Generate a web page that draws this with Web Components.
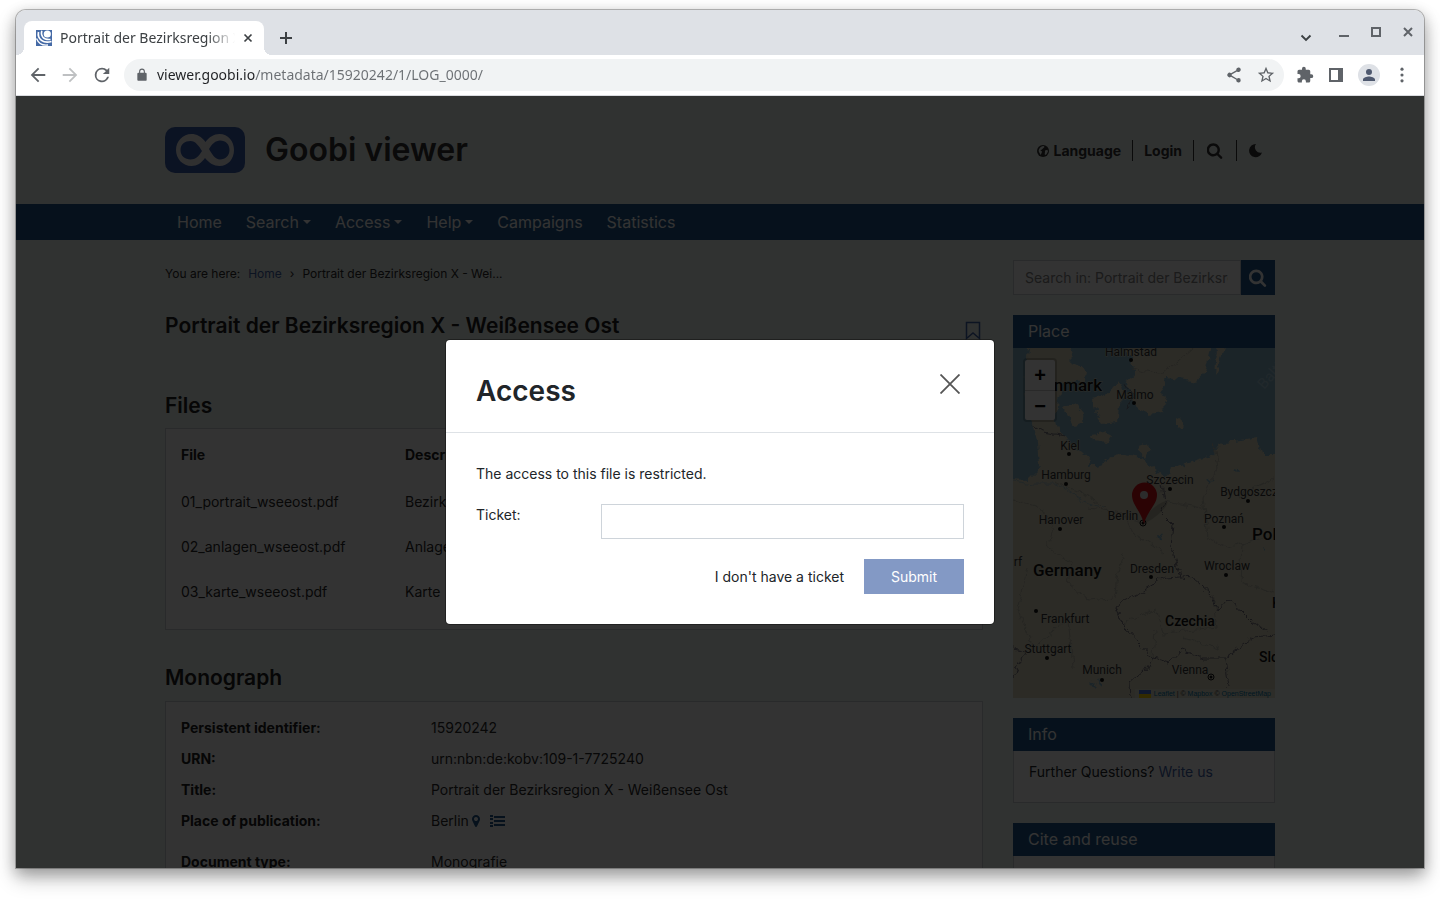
<!DOCTYPE html>
<html lang="en">
<head>
<meta charset="utf-8">
<title>Portrait der Bezirksregion X - Weißensee Ost</title>
<style>
  html, body { height: 100%; }
  body { margin: 0; background: #fff; font-family: Inter, "Liberation Sans", sans-serif; font-size: 14px; line-height: 22px; color: #212529; }
</style>
</head>
<body>
<browser-window>
  <browser-tabs slot="tabs" title-text="Portrait der Bezirksregion X - Weißensee Ost"></browser-tabs>
  <browser-toolbar slot="toolbar"></browser-toolbar>
  <goobi-page>
    <goobi-header slot="header"></goobi-header>
    <goobi-nav slot="nav"></goobi-nav>
    <record-view slot="main"></record-view>
    <side-search slot="side"></side-search>
    <side-widget slot="side" heading="Place" flush><place-map></place-map></side-widget>
    <side-widget slot="side" heading="Info">Further Questions? <text-link>Write us</text-link></side-widget>
    <side-widget slot="side" heading="Cite and reuse">Citation links</side-widget>
  </goobi-page>
  <access-modal slot="overlay" heading="Access"></access-modal>
</browser-window>

<script>
const RESET = `
  *, *::before, *::after { box-sizing: border-box; }
  button, input { font: inherit; color: inherit; margin: 0; padding: 0; border: 0; background: none; border-radius: 0; outline: none; }
  a { text-decoration: none; color: #3f63a8; }
  h1, h2, h3, p, dl, dd, ul { margin: 0; padding: 0; }
  ul { list-style: none; }
  svg { display: block; }
`;
const SEARCH = '<path d="M1216 832q0-185-131.500-316.500t-316.500-131.500-316.500 131.500-131.500 316.500 131.500 316.500 316.500 131.500 316.500-131.500 131.500-316.500zm512 832q0 52-38 90t-90 38q-54 0-90-38l-343-342q-179 124-399 124-143 0-273.500-55.500t-225-150-150-225-55.500-273.500 55.500-273.500 150-225 225-150 273.500-55.500 273.500 55.500 225 150 150 225 55.500 273.500q0 220-124 399l343 343q37 37 37 90z"/>';

function define(name, css, html) {
  customElements.define(name, class extends HTMLElement {
    constructor() {
      super();
      const root = this.attachShadow({ mode: 'open' });
      root.innerHTML = `<style>${RESET}${css}</style>${typeof html === 'function' ? html(this) : html}`;
    }
  });
}

define('browser-window', `
  :host { display: flex; height: 100vh; padding: 10px 16px 32px; box-sizing: border-box; overflow: hidden; }
  .frame { flex: 1; min-width: 0; display: flex; flex-direction: column; border-radius: 10px 10px 0 0; background: #fff;
    box-shadow: 0 0 0 1px rgba(0,0,0,.25), 0 4px 14px 1px rgba(0,0,0,.2), 0 10px 20px rgba(0,0,0,.28); }
  .view { position: relative; flex: 1; min-height: 0; overflow: hidden; border-top: 1px solid #dadce0; }
`, `<div class="frame"><slot name="tabs"></slot><slot name="toolbar"></slot>
    <div class="view"><slot></slot><slot name="overlay"></slot></div></div>`);

define('browser-tabs', `
  :host { display: flex; align-items: flex-end; height: 45px; padding: 0 8px; background: #dee1e6; border-radius: 10px 10px 0 0; font-family: "Noto Sans", sans-serif; font-size: 14px; color: #3c4043; }
  .tab { position: relative; display: flex; align-items: center; gap: 8px; width: 240px; height: 34px; padding: 0 11px 0 12px; background: #fff; border-radius: 8px 8px 0 0; }
  .tab::before, .tab::after { content: ""; position: absolute; bottom: 0; width: 8px; height: 8px; }
  .tab::before { left: -8px; background: radial-gradient(circle at 0 0, #dee1e6 8px, #fff 8px); }
  .tab::after { right: -8px; background: radial-gradient(circle at 100% 0, #dee1e6 8px, #fff 8px); }
  .title { flex: 1; min-width: 0; overflow: hidden; white-space: nowrap; -webkit-mask-image: linear-gradient(to right, #000 84%, transparent); mask-image: linear-gradient(to right, #000 84%, transparent); }
  .new { margin: 0 auto 0 15px; height: 34px; display: flex; align-items: center; }
  .win { display: flex; align-items: center; align-self: flex-start; height: 44px; gap: 20px; padding-right: 2px; color: #5f6368; }
  .win button { display: flex; justify-content: center; width: 12px; }
`, host => `
  <div class="tab">
    <svg width="16" height="16" viewBox="0 0 16 16"><rect width="16" height="16" fill="#456aa6"/><circle cx="11.300" cy="4" r="3.600" fill="#fff"/><g fill="none" stroke="#fff"><path d="M5.800.8C4.500 5.500 7 10.200 14.500 9.500" stroke-width="1.500"/><path d="M2.500 2C1 9 7.500 14 15.500 11.500" stroke-width="1.700"/><path d="M.5 8.500C2.500 13.500 7 15.700 12 15" stroke-width="1.300"/></g></svg>
    <span class="title">${host.getAttribute('title-text')}</span>
    <button aria-label="Close tab"><svg width="10" height="10" viewBox="0 0 10 10" stroke="#3c4043" stroke-width="1.700"><path d="M1.500 1.500l7 7M8.500 1.500l-7 7"/></svg></button>
  </div>
  <button class="new" aria-label="New tab"><svg width="14" height="14" viewBox="0 0 14 14" stroke="#3c4043" stroke-width="2"><path d="M7 1v12M1 7h12"/></svg></button>
  <div class="win">
    <button aria-label="Search tabs"><svg width="12" height="20" viewBox="0 0 12 20" fill="none" stroke="#3c4043" stroke-width="1.900"><path d="M1.500 13.500L6 18l4.500-4.500"/></svg></button>
    <button aria-label="Minimize" style="margin-left:6px"><svg width="12" height="12" viewBox="0 0 12 12" fill="currentColor"><path d="M1 9h10v2H1z"/></svg></button>
    <button aria-label="Maximize"><svg width="10" height="10" viewBox="0 0 10 10" fill="none" stroke="currentColor" stroke-width="2"><path d="M1 1h8v8H1z"/></svg></button>
    <button aria-label="Close window"><svg width="10" height="10" viewBox="0 0 10 10" stroke="currentColor" stroke-width="2"><path d="M1 1l8 8M9 1L1 9"/></svg></button>
  </div>`);

define('browser-toolbar', `
  :host { display: flex; align-items: center; gap: 12px; height: 40px; padding: 0 12px; font-family: "Noto Sans", sans-serif; font-size: 14px; color: #5f6368; }
  svg { fill: currentColor; width: 20px; height: 20px; }
  .omni { flex: 1; display: flex; align-items: center; gap: 8px; height: 32px; padding: 0 9px 0 11px; border-radius: 16px; background: #f1f3f4; }
  .omni svg { width: 18px; height: 18px; }
  .omni svg.lock { width: 14px; height: 14px; }
  input { flex: 1; min-width: 0; height: 22px; color: transparent; -webkit-background-clip: text; background-clip: text; background-image: linear-gradient(to right, #202124 98px, #6b6f73 98px); }
  .omni button + button { margin-left: 6px; }
  .avatar { width: 22px; height: 22px; border-radius: 50%; background: #dee1e6; color: #4e586e; display: grid; place-items: center; }
  .avatar svg { width: 18px; height: 18px; }
  .dim { opacity: .4; }
`, `
  <button aria-label="Back"><svg viewBox="1 1 22 22"><path d="M20 11H7.830l5.590-5.590L12 4l-8 8 8 8 1.410-1.410L7.830 13H20v-2z"/></svg></button>
  <button aria-label="Forward" class="dim"><svg viewBox="1 1 22 22"><path d="M12 4l-1.410 1.410L16.170 11H4v2h12.170l-5.580 5.590L12 20l8-8z"/></svg></button>
  <button aria-label="Reload"><svg viewBox="1 1 22 22"><path d="M17.650 6.350A7.960 7.960 0 0 0 12 4a8 8 0 1 0 7.730 10h-2.080A6 6 0 1 1 12 6c1.660 0 3.140.69 4.220 1.780L13 11h7V4l-2.350 2.350z"/></svg></button>
  <div class="omni">
    <svg class="lock" viewBox="0 0 24 24"><path d="M18 8h-1V6A5 5 0 0 0 7 6v2H6a2 2 0 0 0-2 2v10c0 1.100.9 2 2 2h12a2 2 0 0 0 2-2V10a2 2 0 0 0-2-2zM8.900 6a3.100 3.100 0 0 1 6.200 0v2H8.900V6z"/></svg>
    <input type="text" aria-label="Address" value="viewer.goobi.io/metadata/15920242/1/LOG_0000/">
    <button aria-label="Share"><svg viewBox="0 0 24 24"><path d="M18 16.080c-.76 0-1.440.3-1.960.77L8.910 12.700a3.300 3.300 0 0 0 0-1.400l7.050-4.110A3 3 0 1 0 15 5c0 .24.040.47.090.7L8.040 9.810a3 3 0 1 0 0 4.380l7.120 4.160A2.920 2.920 0 1 0 18 16.080z"/></svg></button>
    <button aria-label="Bookmark this page"><svg viewBox="1 1 22 22"><path d="M22 9.240l-7.190-.62L12 2 9.190 8.630 2 9.240l5.460 4.730L5.820 21 12 17.270 18.180 21l-1.630-7.030L22 9.240zM12 15.400l-3.760 2.270 1-4.280-3.320-2.880 4.380-.38L12 6.100l1.710 4.040 4.380.38-3.320 2.880 1 4.280L12 15.400z"/></svg></button>
  </div>
  <button aria-label="Extensions"><svg viewBox="0 0 24 24" style="width:18px"><path d="M20.500 11H19V7a2 2 0 0 0-2-2h-4V3.500a2.500 2.500 0 0 0-5 0V5H4a2 2 0 0 0-2 2v3.800h1.500a2.700 2.700 0 0 1 0 5.400H2V20c0 1.100.9 2 2 2h3.800v-1.500a2.700 2.700 0 0 1 5.400 0V22H17a2 2 0 0 0 2-2v-4h1.500a2.500 2.500 0 0 0 0-5z"/></svg></button>
  <button aria-label="Side panel"><svg viewBox="0 0 20 20"><path d="M3 3h14v14H3zM5 5v10h7V5z" fill-rule="evenodd"/></svg></button>
  <button aria-label="Profile" class="avatar"><svg viewBox="0 0 24 24"><path d="M12 12a4 4 0 1 0 0-8 4 4 0 0 0 0 8zm0 2c-2.670 0-8 1.340-8 4v2h16v-2c0-2.660-5.330-4-8-4z"/></svg></button>
  <button aria-label="Menu"><svg viewBox="0 0 24 24"><circle cx="12" cy="5" r="1.900"/><circle cx="12" cy="12" r="1.900"/><circle cx="12" cy="19" r="1.900"/></svg></button>`);

define('goobi-page', `
  :host { display: block; background: #f0f7f3; min-height: 100%; }
  .body { max-width: 1110px; margin: 0 auto; padding-top: 20px; display: grid; grid-template-columns: minmax(0, 1fr) 262px; gap: 30px; }
  .side { display: flex; flex-direction: column; gap: 20px; }
`, `<slot name="header"></slot><slot name="nav"></slot>
  <div class="body"><main><slot name="main"></slot></main><aside class="side"><slot name="side"></slot></aside></div>`);

define('goobi-header', `
  :host { display: flex; align-items: center; max-width: 1110px; height: 108px; margin: 0 auto; color: #333; }
  .logo { margin-right: 20px; }
  h1 { flex: 1; font-size: 32px; line-height: 40px; font-weight: 600; }
  ul { display: flex; align-items: center; padding-top: 1px; font-weight: 700; }
  li { display: flex; align-items: center; height: 21px; padding: 0 11px; }
  li + li { border-left: 1px solid #333; }
  li a, li button { display: flex; align-items: center; gap: 5px; color: #333; }
  li svg { fill: currentColor; }
`, `
  <svg class="logo" width="80" height="46" viewBox="0 0 80 46"><rect width="80" height="46" rx="10" fill="#3a5fb0"/><path fill-rule="evenodd" fill="#f0f0f0" d="M40.500 15C36.500 9.500 31.500 7 26.500 7 18 7 11 14 11 23s7 16 15.500 16c5.500 0 10-3 13.500-8 4 5 9 8 14.500 8C63 39 69 32 69 23S63 7 54.500 7c-5.500 0-10.500 3-14 8zM37 24c-3 5-6.500 8.500-11.500 8.500C20 32.500 15.500 29 15.500 23s4.500-9 10-9c5 0 8.500 5 11.500 10zM44 22c3-5 6.500-8.500 11-8.500 6 0 9.500 4 9.500 9.500s-4 9.500-9.500 9.500c-5 0-8-5.500-11-10.500z"/></svg>
  <h1>Goobi viewer</h1>
  <ul>
    <li><button><svg width="12" height="12" viewBox="0 0 12 12"><circle cx="6" cy="6" r="6"/><path fill="#f0f7f3" d="M5 1.300L6.700 1l.8.900-1.300 1.300L4.600 4.700 3.300 5.300l1.700 1.200-.4 1.600-1 1.900L2.500 8 1.600 6 2 4.200l1.200-1.600zM8 5.500l2.300-.7.700 1.400-.9 2L8.800 10 7.600 9.300l.3-1.400z"/></svg>Language</button></li>
    <li><a href="#login">Login</a></li>
    <li style="padding:0 13px"><button aria-label="Search"><svg width="16" height="16" viewBox="100 100 1700 1700">${SEARCH}</svg></button></li>
    <li style="padding-right:12px"><button aria-label="Dark mode"><svg width="15" height="15" viewBox="0 0 15 15"><path d="M8 1A6.600 6.600 0 1 0 14 9.500 5.500 5.500 0 0 1 8 1z"/></svg></button></li>
  </ul>`);

define('goobi-nav', `
  :host { display: block; background: #1f568a; }
  ul { display: flex; max-width: 1110px; margin: 0 auto; font-size: 16px; line-height: 36px; }
  a { display: flex; align-items: center; gap: 4px; padding: 0 12px; color: #fff; }
  .drop::after { content: ""; border: 4px solid transparent; border-top-color: currentColor; border-bottom: 0; }
`, `<nav><ul>
    <li><a href="#home">Home</a></li><li><a class="drop" href="#search">Search</a></li><li><a class="drop" href="#access">Access</a></li>
    <li><a class="drop" href="#help">Help</a></li><li><a href="#campaigns">Campaigns</a></li><li><a href="#statistics">Statistics</a></li></ul></nav>`);

define('text-link', ':host { display: inline; }', '<a href="#contact"><slot></slot></a>');

define('side-search', `
  :host { display: block; }
  form { display: flex; height: 35px; }
  input { flex: 1; min-width: 0; padding: 0 12px 0 11px; background: #fff; border: 1px solid #ccd3d7; }
  input::placeholder { color: #858585; opacity: 1; }
  button { width: 34px; background: #1f568a; display: grid; place-items: center; }
  svg { fill: #fff; }
`, `<form><input type="text" aria-label="Search" placeholder="Search in: Portrait der Bezirksregion X - Weißensee Ost"><button type="button" aria-label="Start search"><svg width="18" height="18" viewBox="80 80 1720 1720">${SEARCH}</svg></button></form>`);

define('side-widget', `
  :host { display: block; }
  h3 { padding: 0 15px; background: #1f568a; color: #fff; font-size: 16px; line-height: 33px; font-weight: 400; }
  .body { padding: 10px 15px 19px; background: #fff; border: 1px solid #ccd3d7; border-top: 0; }
  :host([flush]) .body { padding: 0; border: 0; }
`, host => `<section><h3>${host.getAttribute('heading')}</h3><div class="body"><slot></slot></div></section>`);

const CITIES = [
  ['Halmstad', 118, 8, 118, 12], ['Malmo', 122, 51, 121, 55], ['Kiel', 57, 102, 56, 106], ['Hamburg', 53, 131, 53, 136],
  ['Szczecin', 157, 136, 157, 141], ['Bydgoszcz', 236, 148, 235, 153], ['Hanover', 48, 176, 47, 181],
  ['Poznań', 211, 175, 211, 179], ['Dresden', 139, 225, 138, 229], ['Wroclaw', 214, 222, 213, 227], ['Frankfurt', 52, 275, 23, 263],
  ['Stuttgart', 35, 305, 34, 310], ['Munich', 89, 326, 89, 332]
];
define('place-map', `
  :host { display: block; position: relative; height: 350px; overflow: hidden; background: #85b3c8; }
  .label { font-family: Roboto, sans-serif; font-size: 12px; fill: #333; text-anchor: middle; paint-order: stroke; stroke: #dcdac4; stroke-width: 1px; }
  .land { fill: #d9d5bd; }
  .country { font-weight: 500; fill: #111; text-anchor: start; font-size: 17px; }
  .mid { font-size: 14px; }
  .line { fill: none; stroke: #77747f; stroke-width: 1; }
  .thin { fill: none; stroke: #b9b7a9; stroke-width: 1; }
  .zoom { position: absolute; left: 12px; top: 12px; width: 30px; background: #fff; outline: 2px solid rgba(0,0,0,.2); border-radius: 2px; }
  .zoom button { display: grid; place-items: center; width: 30px; height: 30px; color: #000; font: 700 20px/22px "Liberation Sans", sans-serif; }
  .zoom button + button { border-top: 1px solid #ccc; }
  .credit { position: absolute; right: 0; bottom: 0; display: flex; align-items: center; gap: 3px; padding: 0 4px; height: 9px; background: rgba(255,255,255,.25); font: 7px/9px "Liberation Sans", sans-serif; color: #333; white-space: nowrap; }
  .credit a { color: #0078a8; }
`, `
  <svg width="100%" height="350">
    <defs><filter id="rough" x="-5%" y="-5%" width="110%" height="110%"><feTurbulence type="fractalNoise" baseFrequency="0.12" numOctaves="3" seed="4"/><feDisplacementMap in="SourceGraphic" scale="9" xChannelSelector="R" yChannelSelector="G"/></filter></defs>
    <g filter="url(#rough)">
      <g class="land">
        <path d="M16-8L14 10 12 40 14 62 20 75 24 92 25 107 27 122 17 132-8 131V362H280V107H249L244 89 210 95 200 107 184 112 160 120 152 130 137 117 127 109 107 105 89 115 76 119 77 109 60 101 52 89 44 82 42 74 45 52 50 35 72 32 73 22 55 14 61 8 54-8z"/>
        <path d="M108-8L119 12 122 24 112 32 120 47 122 59 137 66 149 64 153 52 149 39 154 29 184 34 192 25 199-8zM50 60L62 54 72 66 70 76 60 78zM80 50L96 44 105 33 113 46 106 60 104 74 90 76 82 64zM78 86L90 84 98 88 94 94 80 92zM162 70l8 4-1 7-7-3zM207-5l3 4-6 25-3 4 1-14zM124 103l6-9 7 7-5 9z"/>
      </g>
      <path class="thin" d="M0 150L28 160 40 180 35 200 60 215 55 235 75 252 100 250M75 160L110 165 120 185 150 205M42 133L80 150 100 168 130 175M200 95L205 120 190 150 195 190 215 200 250 190M110 205L105 230 102 250M15 220L5 262 20 300 55 270 60 320M110 275L142 262 150 285 205 280 200 245M140 310L142 282M225 148L262 130M230 195L228 235 262 245M150 153L190 160M118 20L150 26 180 0M170 290L205 300"/>
      <path class="line" d="M149 135L152 155 148 165 160 177 158 198 168 229 180 230 197 245 205 262 214 252 227 262 240 275 255 282 M102 257L130 243 150 230 168 229M102 257L112 280 140 310 157 315 169 302 190 310 212 310 240 289 265 287M140 310L132 322 117 335 118 352M212 310L216 340M0 300L12 303 0 330M18 76L30 84 52 88M111 35L120 48 113 62"/>
      <path d="M0 133L20 136 45 136 70 152 90 160" fill="none" stroke="#85b3c8" opacity=".6"/>
      <path d="M78 334l5 6M85 330l4 8M222 120l4 2M147 185l2 6M195 130l4 4M250 200l3 2" stroke="#85b3c8" stroke-width="2"/>
    </g>
    <g>${CITIES.map(([n, x, y, cx, cy]) => `<text class="label" x="${x}" y="${y}">${n}</text><circle cx="${cx}" cy="${cy}" r="2" fill="#111"/>`).join('')}
      <text class="label" x="110" y="172">Berlin</text><text class="label" x="177" y="326">Vienna</text><text class="label" x="5" y="218">rf</text>
      <g fill="none" stroke="#111"><circle cx="130" cy="175" r="3"/><circle cx="198" cy="329" r="3"/></g><g fill="#111"><circle cx="130" cy="175" r="1.500"/><circle cx="198" cy="329" r="1.500"/></g>
      <text class="label country" x="89" y="43" style="text-anchor:end">Denmark</text>
      <text class="label country" x="20" y="228">Germany</text><text class="label country" x="239" y="192">Poland</text>
      <text class="label country mid" x="152" y="278">Czechia</text><text class="label country mid" x="246" y="314">Slovakia</text><text class="label country mid" x="259" y="260">Kraków</text>
      <text transform="translate(251 42) rotate(-48)" font-family="Roboto, sans-serif" font-size="15" fill="#a5c8d8">Baltic</text>
    </g>
    <ellipse cx="142" cy="164" rx="16" ry="4" transform="rotate(-40 142 164)" fill="#000" opacity=".15"/>
    <path d="M131 176C128 163 119 157 119 147a12.500 12.500 0 0 1 25 0c0 10-10 16-13 29z" fill="#d81118"/><circle cx="131" cy="147" r="4" fill="#ddd"/>
  </svg>
  <div class="zoom"><button aria-label="Zoom in">+</button><button aria-label="Zoom out">−</button></div>
  <div class="credit"><svg width="12" height="8" viewBox="0 0 12 8"><path fill="#4c7be1" d="M0 0h12v4H0z"/><path fill="#ffd500" d="M0 4h12v4H0z"/></svg><span><a href="#leaflet">Leaflet</a> | © <a href="#mapbox">Mapbox</a> © <a href="#osm">OpenStreetMap</a></span></div>`);

define('record-view', `
  :host { display: block; color: #2a2a2a; }
  .crumbs { display: flex; gap: 8px; padding-top: 3px; font-size: 12px; }
  .head { display: flex; justify-content: space-between; align-items: flex-start; height: 24px; margin-top: 29px; }
  h2 { font-size: 21px; line-height: 24px; font-weight: 600; color: #222; }
  .files-title { margin: 56px 0 10px; }
  .mono-title { margin: 36px 0 11px; }
  .card { background: #fff; border: 1px solid #ccd3d7; padding: 15px; }
  .head svg { margin: 7px 2px 0 0; }
  table { width: 100%; border-collapse: collapse; table-layout: fixed; }
  th, td { text-align: left; padding: 0; height: 45px; font-weight: 400; vertical-align: middle; }
  th { height: 35px; vertical-align: top; font-weight: 700; color: #222; }
  th:first-child { width: 224px; }
  dl { display: grid; grid-template-columns: 250px 1fr; row-gap: 9px; }
  dt { font-weight: 700; color: #222; }
  dd { display: flex; align-items: center; }
  .gap { padding-bottom: 10px; }
`, `
  <nav class="crumbs" aria-label="Breadcrumb"><span>You are here:</span><a href="#home">Home</a><span>›</span><span>Portrait der Bezirksregion X - Wei...</span></nav>
  <div class="head"><h2>Portrait der Bezirksregion X - Weißensee Ost</h2><button aria-label="Bookmark"><svg width="16" height="20" viewBox="0 0 16 20" fill="none" stroke="#3f63a8" stroke-width="1.500"><path d="M1.500 1.500h13v16L8 12l-6.500 5.500z"/></svg></button></div>
  <h2 class="files-title">Files</h2>
  <div class="card"><table>
    <thead><tr><th>File</th><th>Description</th></tr></thead>
    <tbody><tr><td>01_portrait_wseeost.pdf</td><td>Bezirksregion</td></tr><tr><td>02_anlagen_wseeost.pdf</td><td>Anlagen</td></tr><tr><td>03_karte_wseeost.pdf</td><td>Karte</td></tr></tbody>
  </table></div>
  <h2 class="mono-title">Monograph</h2>
  <div class="card"><dl>
    <dt>Persistent identifier:</dt><dd>15920242</dd>
    <dt>URN:</dt><dd>urn:nbn:de:kobv:109-1-7725240</dd>
    <dt>Title:</dt><dd>Portrait der Bezirksregion X - Weißensee Ost</dd>
    <dt class="gap">Place of publication:</dt><dd class="gap">Berlin
      <svg width="16" height="14" viewBox="0 0 2048 1792" fill="#1f568a"><path d="M1152 640q0-106-75-181t-181-75-181 75-75 181 75 181 181 75 181-75 75-181zm256 0q0 109-33 179l-364 774q-16 33-47.500 52t-67.500 19-67.500-19-46.500-52l-365-774q-33-70-33-179 0-212 150-362t362-150 362 150 150 362z"/></svg>
      <svg width="20" height="12" viewBox="-5 0 20 12" fill="#1f568a"><path d="M0 0h3v2H0zM0 3h3v2H0zM0 7h3v2H0zM0 10h3v2H0zM4 1h11v2H4zM4 5h11v2H4zM4 9h11v2H4z"/></svg></dd>
    <dt>Document type:</dt><dd>Monografie</dd>
  </dl></div>`);

define('access-modal', `
  :host { position: absolute; inset: 0; display: flex; align-items: center; justify-content: center; background: rgba(0,0,0,.8); }
  .dialog { width: 548px; max-width: 100%; background: #fff; border-radius: 4px; box-shadow: 0 0 0 1px rgba(0,0,0,.35); color: #212529; }
  header { display: flex; justify-content: space-between; height: 93px; padding: 34px 34px 0 30px; border-bottom: 1px solid #dee2e6; }
  h2 { font-size: 28px; line-height: 34px; font-weight: 600; }
  .close { align-self: flex-start; }
  form { display: flex; flex-direction: column; gap: 20px; padding: 30px; }
  p { line-height: 21px; }
  .field { display: grid; grid-template-columns: 125px 1fr; }
  .field input { height: 35px; border: 1px solid #ced4da; padding: 0 12px; background: #fff; }
  .actions { display: flex; justify-content: flex-end; gap: 20px; height: 35px; }
  .submit { width: 100px; background: #8399c5; color: #fff; }
`, host => `<div class="dialog" role="dialog" aria-modal="true" aria-labelledby="t">
  <header><h2 id="t">${host.getAttribute('heading')}</h2><button class="close" aria-label="Close"><svg width="20" height="20" viewBox="0 0 20 20" stroke="#555" stroke-width="1.800"><path d="M.5.5l19 19M19.500.5l-19 19"/></svg></button></header>
  <form><p>The access to this file is restricted.</p>
    <div class="field"><label for="ticket">Ticket:</label><input id="ticket" type="text"></div>
    <div class="actions"><button type="button">I don't have a ticket</button><button type="button" class="submit">Submit</button></div>
  </form></div>`);
</script>
</body>
</html>
